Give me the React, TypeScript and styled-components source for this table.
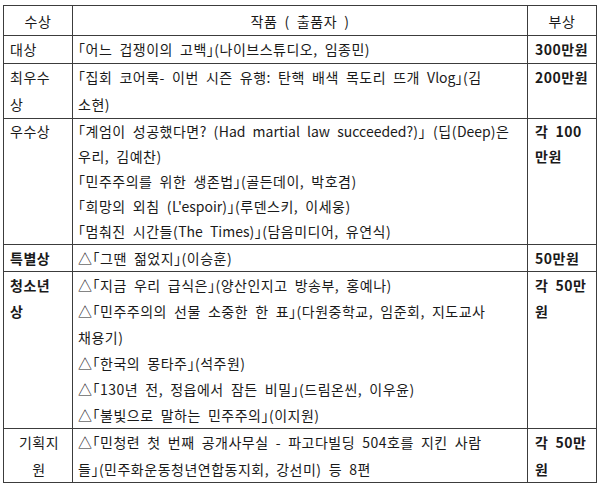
import React from "react";
import styled, { createGlobalStyle } from "styled-components";

const GlobalStyle = createGlobalStyle`
  html, body {
    margin: 0;
    padding: 0;
    background: #ffffff;
  }
  body {
    font-family: "Noto Sans CJK KR", "Noto Sans", sans-serif;
    color: #1a1a1a;
  }
`;

const Page = styled.div`
  width: 600px;
  height: 488px;
  padding: 5px 0 0 3px;
  box-sizing: border-box;
`;

const Table = styled.table`
  width: 593px;
  table-layout: fixed;
  border-collapse: collapse;
  font-size: 14px;
  letter-spacing: 0.5px;
  word-spacing: 3.5px;
  font-feature-settings: "halt" 1;
`;

const HeadCell = styled.th`
  height: 28px;
  padding: 1px 0 0;
  border: 1px solid #3c3c3c;
  font-weight: 400;
  text-align: center;
  vertical-align: middle;
  line-height: 28px;
`;

const Cell = styled.td<{ $lh: number; $center?: boolean; $bold?: boolean; $pl?: number }>`
  padding: 0 4px 0 ${(p) => p.$pl ?? 5}px;
  border: 1px solid #3c3c3c;
  vertical-align: top;
  line-height: ${(p) => p.$lh}px;
  text-align: ${(p) => (p.$center ? "center" : "left")};
  font-weight: ${(p) => (p.$bold ? 700 : 400)};
  overflow: hidden;
`;

const Line = styled.div`
  white-space: nowrap;
`;

// latin runs sit tighter than the hangul around them
const Latin = styled.span`
  letter-spacing: 0;
`;

type Row = {
  award: string[];
  awardBold?: boolean;
  awardCenter?: boolean;
  works: string[];
  prize: string[];
  lh: number;
};

const rows: Row[] = [
  {
    award: ["대상"],
    works: ["「어느 겁쟁이의 고백」(나이브스튜디오, 임종민)"],
    prize: ["300만원"],
    lh: 27,
  },
  {
    award: ["최우수", "상"],
    works: ["「집회 코어룩- 이번 시즌 유행: 탄핵 배색 목도리 뜨개 Vlog」(김", "소현)"],
    prize: ["200만원"],
    lh: 27,
  },
  {
    award: ["우수상"],
    works: [
      "「계엄이 성공했다면? (Had martial law succeeded?)」 (딥(Deep)은",
      "우리, 김예찬)",
      "「민주주의를 위한 생존법」(골든데이, 박호겸)",
      "「희망의 외침 (L'espoir)」(루덴스키, 이세웅)",
      "「멈춰진 시간들(The Times)」(담음미디어, 유연식)",
    ],
    prize: ["각 100", "만원"],
    lh: 25,
  },
  {
    award: ["특별상"],
    awardBold: true,
    works: ["△「그땐 젊었지」(이승훈)"],
    prize: ["50만원"],
    lh: 26,
  },
  {
    award: ["청소년", "상"],
    awardBold: true,
    works: [
      "△「지금 우리 급식은」(양산인지고 방송부, 홍예나)",
      "△「민주주의의 선물 소중한 한 표」(다원중학교, 임준회, 지도교사",
      "채용기)",
      "△「한국의 몽타주」(석주원)",
      "△「130년 전, 정읍에서 잠든 비밀」(드림온씬, 이우윤)",
      "△「불빛으로 말하는 민주주의」(이지원)",
    ],
    prize: ["각 50만", "원"],
    lh: 26,
  },
  {
    award: ["기획지", "원"],
    awardCenter: true,
    works: [
      "△「민청련 첫 번째 공개사무실 - 파고다빌딩 504호를 지킨 사람",
      "들」(민주화운동청년연합동지회, 강선미) 등 8편",
    ],
    prize: ["각 50만", "원"],
    lh: 26.5,
  },
];

const renderText = (text: string) =>
  text.split(/([A-Za-z'?]+)/).map((part, k) =>
    /^[A-Za-z'?]+$/.test(part) ? <Latin key={k}>{part}</Latin> : part
  );

export default function App() {
  return (
    <Page>
      <GlobalStyle />
      <Table>
        <colgroup>
          <col style={{ width: 69 }} />
          <col style={{ width: 455 }} />
          <col style={{ width: 69 }} />
        </colgroup>
        <thead>
          <tr>
            <HeadCell>수상</HeadCell>
            <HeadCell>작품 ( 출품자 )</HeadCell>
            <HeadCell>부상</HeadCell>
          </tr>
        </thead>
        <tbody>
          {rows.map((r, i) => (
            <tr key={i}>
              <Cell $lh={r.lh} $bold={r.awardBold} $center={r.awardCenter} $pl={6}>
                {r.award.map((t, j) => (
                  <Line key={j}>{t}</Line>
                ))}
              </Cell>
              <Cell $lh={r.lh}>
                {r.works.map((t, j) => (
                  <Line key={j}>{renderText(t)}</Line>
                ))}
              </Cell>
              <Cell $lh={r.lh} $bold $pl={7}>
                {r.prize.map((t, j) => (
                  <Line key={j}>{t}</Line>
                ))}
              </Cell>
            </tr>
          ))}
        </tbody>
      </Table>
    </Page>
  );
}
